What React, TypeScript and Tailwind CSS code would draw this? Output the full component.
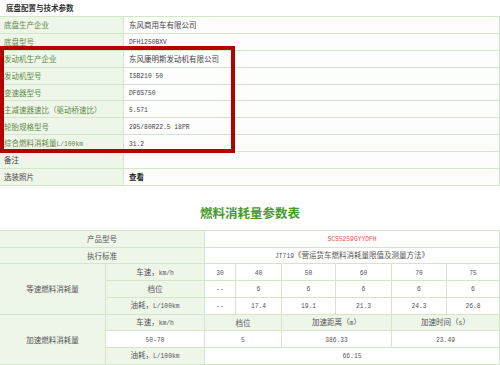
import React from 'react'

const chassis: [string, string][] = [
  ['底盘生产企业', '东风商用车有限公司'],
  ['底盘型号', 'DFH1250BXV'],
  ['发动机生产企业', '东风康明斯发动机有限公司'],
  ['发动机型号', 'ISB210 50'],
  ['变速器型号', 'DF6S750'],
  ['主减速器速比（驱动桥速比）', '5.571'],
  ['轮胎规格型号', '295/80R22.5 18PR'],
  ['综合燃料消耗量L/100km', '31.2'],
  ['备注', ''],
  ['选装照片', '查看'],
]

const speeds = ['30', '40', '50', '60', '70', '75']
const gears = ['--', '6', '6', '6', '6', '6']
const fuel = ['--', '17.4', '19.1', '21.3', '24.3', '26.8']

// latin runs get a narrow mono face, like the half-width glyphs of the original
function Txt({ s }: { s: string }) {
  const parts = s.split(/([\x20-\x7e]+)/).filter(Boolean)
  return (
    <span className="whitespace-pre">
      {parts.map((p, i) =>
        /^[\x20-\x7e]+$/.test(p) ? (
          <span key={i} className="font-['Liberation_Mono',monospace] text-[6.3px]">{p}</span>
        ) : (
          <span key={i}>{p}</span>
        )
      )}
    </span>
  )
}

function Cell({ s, head, span, red }: { s: string; head?: boolean; span?: string; red?: boolean }) {
  return (
    <div
      className={`flex items-center justify-center border-r border-b border-[#d3e7c6] ${head ? 'bg-[#eef6ea]' : 'bg-white'} ${red ? 'text-[#d9534f]' : 'text-[#555]'} ${span ?? ''}`}
    >
      <Txt s={s} />
    </div>
  )
}

export default function App() {
  return (
    <div className="relative w-[500px] h-[365px] overflow-hidden bg-white font-['Noto_Sans_CJK_SC',sans-serif] text-[7.5px] leading-none">
      {/* Chassis table */}
      <div className="h-[16px] flex items-center pl-[6px] font-bold text-[#333]">底盘配置与技术参数</div>
      <div className="border-t border-[#d3e7c6]">
        {chassis.map(([label, value], i) => (
          <div key={label} className="grid grid-cols-[124px_1fr] h-[16.9px] border-b border-[#d3e7c6]">
            <div className={`flex items-center pl-[4px] bg-[#eef6ea] border-r border-[#d3e7c6] ${i >= 8 ? 'text-[#444]' : 'text-[#5f8a45]'}`}>
              <Txt s={label} />
            </div>
            <div className={`flex items-center pl-[5px] bg-[#fdfdfd] border-r border-[#d3e7c6] ${i === 9 ? 'font-bold text-[#222]' : 'text-[#444]'}`}>
              <Txt s={value} />
            </div>
          </div>
        ))}
      </div>

      {/* Fuel consumption table */}
      <div className="pt-[18px] pb-[8px] text-center text-[12.5px] leading-[18px] font-bold text-[#479b2d]">燃料消耗量参数表</div>
      <div className="grid grid-cols-[106px_99px_31px_46px_54px_56px_55px_53px] grid-rows-[repeat(8,16.75px)] border-t border-[#d3e7c6]">
        <Cell s="产品型号" head span="col-span-2" />
        <Cell s="SCS5259GYYDFH" red span="col-span-6" />
        <Cell s="执行标准" head span="col-span-2" />
        <Cell s="JT719《营运货车燃料消耗量限值及测量方法》" span="col-span-6" />

        <Cell s="等速燃料消耗量" head span="row-span-3" />
        <Cell s="车速，km/h" head />
        {speeds.map((v, i) => <Cell key={'s' + i} s={v} />)}
        <Cell s="档位" head />
        {gears.map((v, i) => <Cell key={'g' + i} s={v} />)}
        <Cell s="油耗，L/100km" head />
        {fuel.map((v, i) => <Cell key={'f' + i} s={v} />)}

        <Cell s="加速燃料消耗量" head span="row-span-3" />
        <Cell s="车速，km/h" head />
        <Cell s="档位" head span="col-span-2" />
        <Cell s="加速距离（m）" head span="col-span-2" />
        <Cell s="加速时间（s）" head span="col-span-2" />
        <Cell s="50-70" />
        <Cell s="5" span="col-span-2" />
        <Cell s="386.33" span="col-span-2" />
        <Cell s="23.49" span="col-span-2" />
        <Cell s="油耗，L/100km" head />
        <Cell s="66.15" span="col-span-6" />
      </div>

      {/* red highlight annotation */}
      <div className="absolute left-0 top-[46px] w-[235px] h-[107px] border-[4px] border-[#b50000]" />
    </div>
  )
}
